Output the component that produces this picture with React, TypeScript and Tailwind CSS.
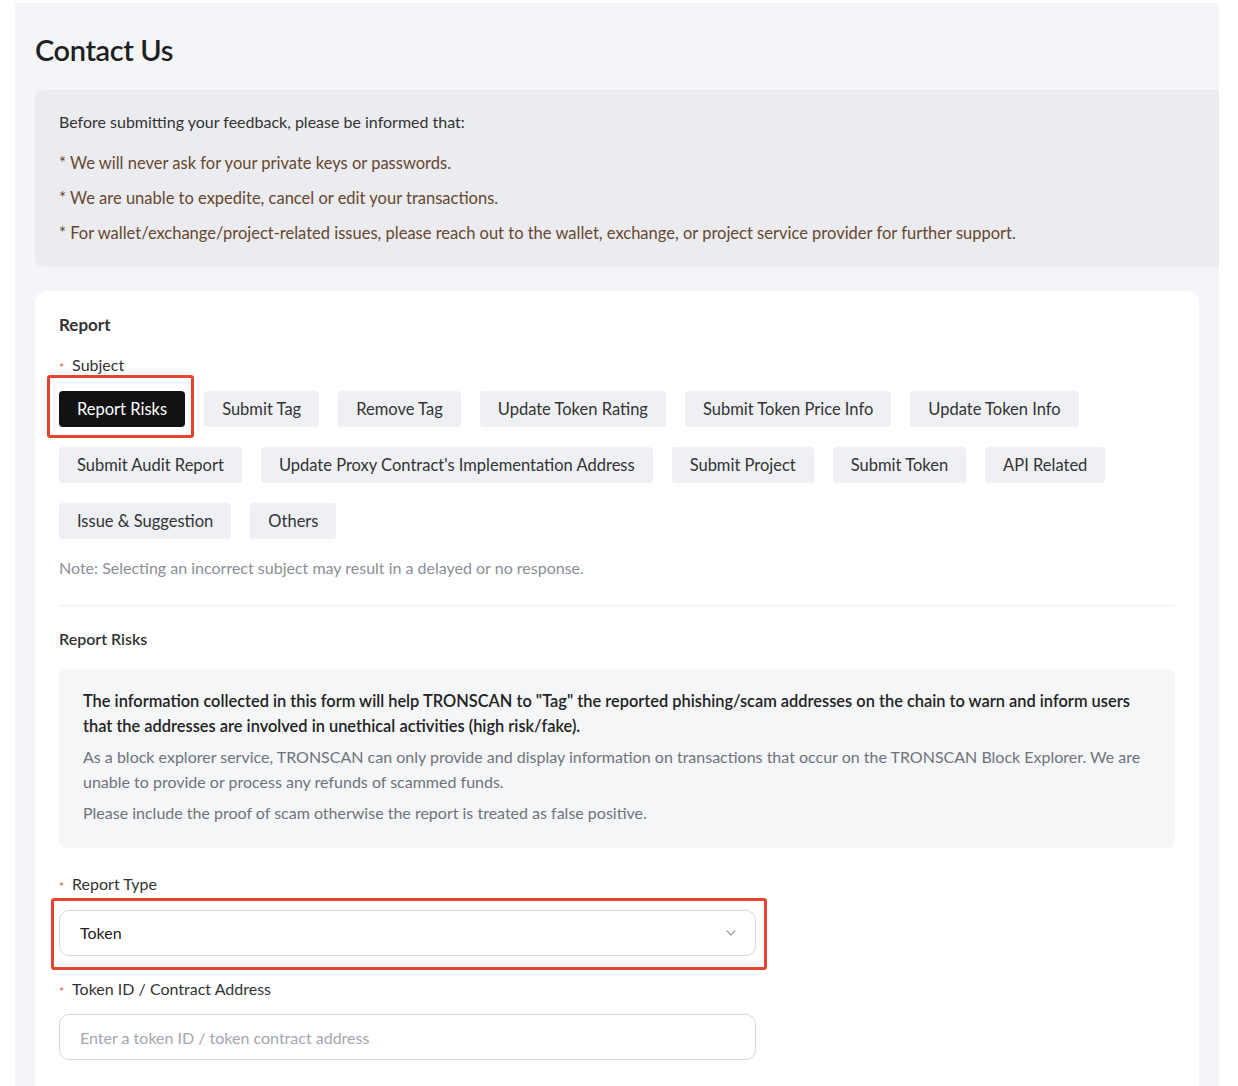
import { ChevronDown } from "lucide-react";

const SUBJECTS = [
  "Report Risks",
  "Submit Tag",
  "Remove Tag",
  "Update Token Rating",
  "Submit Token Price Info",
  "Update Token Info",
  "Submit Audit Report",
  "Update Proxy Contract's Implementation Address",
  "Submit Project",
  "Submit Token",
  "API Related",
  "Issue & Suggestion",
  "Others",
];

function Label({ children }: { children: React.ReactNode }) {
  return (
    <div className="flex items-center gap-2 text-[16px] leading-6 text-[#333]">
      <span className="mt-[5px] text-[12px] leading-none text-[#e5533d]">*</span>
      {children}
    </div>
  );
}

export default function App() {
  return (
    <div
      className="min-h-[1086px] bg-white pl-[15px] pr-[19px] pt-[3px]"
      style={{ fontFamily: "Lato, 'Noto Sans', sans-serif" }}
    >
      <div className="min-h-[1083px] bg-[#f4f5f8] pl-5">
        {/* Header */}
        <h1 className="flex h-[87px] items-center pt-[7px] text-[29px] font-semibold tracking-[-0.4px] text-[#1f1f1f]">
          Contact Us
        </h1>

        {/* Notice */}
        <div className="rounded-l-lg bg-[#ebecf0] px-6 pb-4 pt-[14px] leading-[35px]">
          <p className="text-[16px] text-[#333]">Before submitting your feedback, please be informed that:</p>
          <div className="text-[16.5px] text-[#66472f]">
            <p className="mt-[7px]">* We will never ask for your private keys or passwords.</p>
            <p>* We are unable to expedite, cancel or edit your transactions.</p>
            <p>
              * For wallet/exchange/project-related issues, please reach out to the wallet, exchange, or project service provider for further support.
            </p>
          </div>
        </div>

        {/* Report card */}
        <div className="mr-5 mt-6 rounded-t-xl bg-white px-6 pb-7 pt-[22px]">
          <h2 className="text-[17px] font-bold leading-6 text-[#333]">Report</h2>
          <div className="mt-4">
            <Label>Subject</Label>
          </div>
          <div className="mt-[14px] flex flex-wrap gap-x-[19px] gap-y-5">
            {SUBJECTS.map((s, i) =>
              i === 0 ? (
                <div key={s} className="relative">
                  <button className="h-9 rounded bg-[#111] px-[18px] text-[16.5px] text-white">{s}</button>
                  <div className="pointer-events-none absolute -bottom-[11px] -left-3 -right-[9px] -top-4 rounded-[3px] border-[3px] border-[#e8432e]" />
                </div>
              ) : (
                <button key={s} className="h-9 rounded bg-[#eef0f4] px-[18px] text-[16.5px] text-[#333]">
                  {s}
                </button>
              )
            )}
          </div>
          <p className="mt-[17px] text-[16px] leading-6 text-[#8a8e97]">
            Note: Selecting an incorrect subject may result in a delayed or no response.
          </p>

          <div className="mt-[25px] h-px bg-[#eceef2]" />

          <h3 className="mt-[21px] text-[16px] font-semibold leading-6 text-[#333]">Report Risks</h3>

          <div className="mt-[18px] rounded-lg bg-[#f5f6f8] px-6 pb-[23px] pt-[19px] text-[16px] leading-[25px]">
            <p className="text-[16.4px] font-semibold text-[#222]">
              The information collected in this form will help TRONSCAN to "Tag" the reported phishing/scam addresses on the chain to warn and inform users that the addresses are involved in unethical activities (high risk/fake).
            </p>
            <p className="mt-[6px] text-[#6f737b]">
              As a block explorer service, TRONSCAN can only provide and display information on transactions that occur on the TRONSCAN Block Explorer. We are unable to provide or process any refunds of scammed funds.
            </p>
            <p className="mt-[6px] text-[#6f737b]">
              Please include the proof of scam otherwise the report is treated as false positive.
            </p>
          </div>

          <div className="mt-6">
            <Label>Report Type</Label>
          </div>
          <div className="relative mt-[14px] w-[697px]">
            <div className="flex h-[46px] items-center justify-between rounded-[10px] border border-[#d5d8de] pl-5 pr-4 text-[16px] text-[#222]">
              Token
              <ChevronDown className="h-4 w-4 text-[#9a9ea6]" strokeWidth={1.8} />
            </div>
            <div className="pointer-events-none absolute -bottom-[14px] -left-2 -right-[11px] -top-[12px] rounded-[3px] border-[3px] border-[#e8432e]" />
          </div>

          <div className="mt-[21px]">
            <Label>Token ID / Contract Address</Label>
          </div>
          <input
            className="mt-[13px] h-[46px] w-[697px] rounded-[10px] border border-[#d5d8de] px-5 text-[16px] text-[#222] outline-none placeholder:text-[#a3a7ae]"
            placeholder="Enter a token ID / token contract address"
          />
        </div>
      </div>
    </div>
  );
}
